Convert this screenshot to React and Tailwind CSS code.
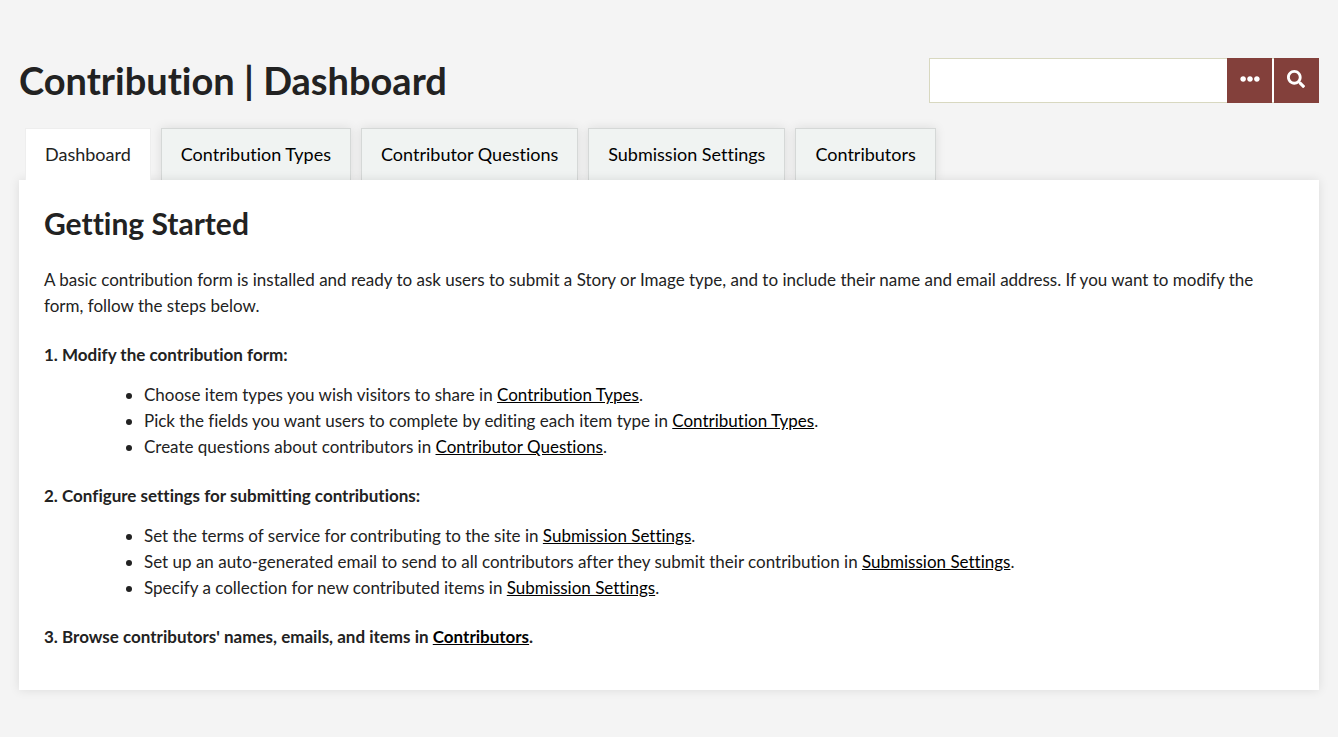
import React from "react";
import { FaEllipsisH, FaSearch } from "react-icons/fa";

const tabs = [
  { label: "Dashboard", href: "#dashboard" },
  { label: "Contribution Types", href: "#types" },
  { label: "Contributor Questions", href: "#questions" },
  { label: "Submission Settings", href: "#settings" },
  { label: "Contributors", href: "#contributors" },
];

const modifySteps = [
  {
    text: "Choose item types you wish visitors to share in ",
    link: "Contribution Types",
    href: "#types",
  },
  {
    text: "Pick the fields you want users to complete by editing each item type in ",
    link: "Contribution Types",
    href: "#types",
  },
  {
    text: "Create questions about contributors in ",
    link: "Contributor Questions",
    href: "#questions",
  },
];

const settingsSteps = [
  {
    text: "Set the terms of service for contributing to the site in ",
    link: "Submission Settings",
    href: "#settings",
  },
  {
    text: "Set up an auto-generated email to send to all contributors after they submit their contribution in ",
    link: "Submission Settings",
    href: "#settings",
  },
  {
    text: "Specify a collection for new contributed items in ",
    link: "Submission Settings",
    href: "#settings",
  },
];

const StepList = ({ steps }) => (
  <ul className="list-disc pl-[100px] mt-[14px] mb-[23px]">
    {steps.map((step) => (
      <li key={step.text}>
        {step.text}
        <a href={step.href} className="text-black underline">
          {step.link}
        </a>
        .
      </li>
    ))}
  </ul>
);

const SearchForm = () => (
  <form
    className="flex h-[45px] bg-white border-y border-[#d8d8c0]"
    onSubmit={(e) => e.preventDefault()}
  >
    <input
      type="text"
      aria-label="Search"
      className="w-[298px] px-2 border-l border-[#d8d8c0] outline-none"
    />
    <button
      type="button"
      aria-label="Advanced search"
      className="w-[45px] -my-px pb-[3px] flex items-center justify-center bg-[#83403b] text-white"
    >
      <FaEllipsisH className="w-5 h-5" />
    </button>
    <button
      type="submit"
      aria-label="Submit search"
      className="w-[45px] -my-px ml-[2px] pb-[3px] pr-[2px] flex items-center justify-center bg-[#83403b] text-white"
    >
      <FaSearch className="w-[18px] h-[18px]" />
    </button>
  </form>
);

const App = () => {
  return (
    <div className="min-h-screen bg-[#f4f4f4] px-[19px] pt-[58px] pb-12 font-[Lato,sans-serif] text-[17px] leading-[26px] text-[#222] [font-variant-ligatures:no-common-ligatures]">
      <header className="flex justify-between h-[70px]">
        <h1 className="text-[38px] leading-[44px] font-bold">
          Contribution | Dashboard
        </h1>
        <SearchForm />
      </header>

      {/* Section tabs */}
      <nav className="flex gap-[10px] px-[6px] text-[18px]">
        {tabs.map((tab, i) => (
          <a
            key={tab.href}
            href={tab.href}
            className={
              i === 0
                ? "relative z-10 h-[52px] px-[19px] py-3 border border-b-0 border-[#eee] bg-white"
                : "h-[52px] px-[19px] py-3 border border-b-0 border-[#d5d8d7] bg-[#f0f3f2] text-black shadow-[0_0_10px_rgba(0,0,0,0.1)]"
            }
          >
            {tab.label}
          </a>
        ))}
      </nav>

      <main className="relative bg-white px-[25px] pt-[25px] pb-10 shadow-[0_0_10px_rgba(0,0,0,0.1)]">
        <h2 className="text-[30px] leading-9 font-bold mb-[26px]">
          Getting Started
        </h2>
        <p className="mb-[23px]">
          A basic contribution form is installed and ready to ask users to
          submit a Story or Image type, and to include their name and email
          address. If you want to modify the form, follow the steps below.
        </p>

        <p className="font-bold">1. Modify the contribution form:</p>
        <StepList steps={modifySteps} />

        <p className="font-bold">
          2. Configure settings for submitting contributions:
        </p>
        <StepList steps={settingsSteps} />

        <p className="font-bold">
          3. Browse contributors' names, emails, and items in{" "}
          <a href="#contributors" className="text-black underline">
            Contributors
          </a>
          .
        </p>
      </main>
    </div>
  );
};

export default App;
